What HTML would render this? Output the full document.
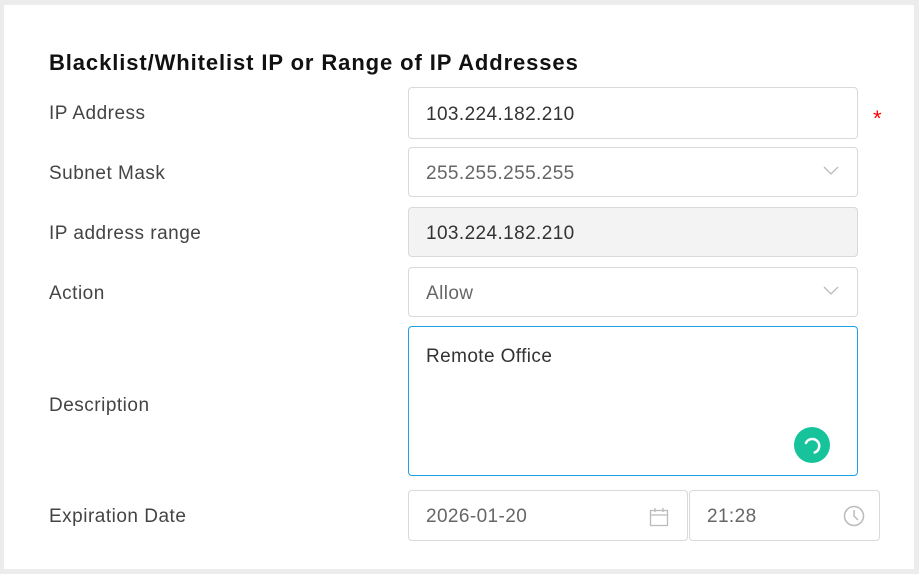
<!DOCTYPE html>
<html><head><style>
body{margin:0;width:919px;height:574px;background:#ececec;font-family:"Liberation Sans",sans-serif;position:relative;overflow:hidden}
.card{position:absolute;left:4px;top:5px;width:910px;height:564px;background:#fff}
.t{position:absolute;left:49px;top:50px;font-size:22px;font-weight:bold;color:#111;letter-spacing:0.9px}
.l{position:absolute;left:49px;font-size:19px;color:#444;letter-spacing:0.5px}
.b{position:absolute;box-sizing:border-box;border:1px solid #d9d9d9;border-radius:4px;background:#fff;font-size:19px;color:#333;padding-left:17px;padding-top:3px;display:flex;align-items:center;letter-spacing:0.4px}
.g{color:#666}
</style></head><body>
<div class="card"></div>
<div class="t">Blacklist/Whitelist IP or Range of IP Addresses</div>
<div class="l" style="top:103px">IP Address</div>
<div class="l" style="top:163px">Subnet Mask</div>
<div class="l" style="top:223px">IP address range</div>
<div class="l" style="top:283px">Action</div>
<div class="l" style="top:395px">Description</div>
<div class="l" style="top:506px">Expiration Date</div>
<div class="b" style="left:408px;top:87px;width:450px;height:52px">103.224.182.210</div>
<div style="position:absolute;left:873px;top:106px;color:#f00;font-size:22px">*</div>
<div class="b g" style="left:408px;top:147px;width:450px;height:50px">255.255.255.255
<svg style="position:absolute;right:18px;top:18px" width="16" height="10"><path d="M1 1l7 7 7-7" fill="none" stroke="#bbb" stroke-width="1.3"/></svg></div>
<div class="b" style="left:408px;top:207px;width:450px;height:50px;background:#f3f3f3">103.224.182.210</div>
<div class="b g" style="left:408px;top:267px;width:450px;height:50px">Allow
<svg style="position:absolute;right:18px;top:18px" width="16" height="10"><path d="M1 1l7 7 7-7" fill="none" stroke="#bbb" stroke-width="1.3"/></svg></div>
<div class="b" style="left:408px;top:326px;width:450px;height:150px;border-color:#1aa3e0;align-items:flex-start;padding-top:19px">Remote Office
<div style="position:absolute;left:385px;top:100px;width:36px;height:36px;border-radius:50%;background:#17c39b"><svg width="36" height="36"><path d="M13 14a7 7 0 1 1 5 12" fill="none" stroke="#fff" stroke-width="2.5" stroke-linecap="round" transform="rotate(-20 18 18)"/></svg></div></div>
<div class="b g" style="left:408px;top:490px;width:280px;height:51px">2026-01-20
<svg style="position:absolute;right:18px;top:16px" width="20" height="20"><rect x="1.5" y="3.5" width="17" height="15" fill="none" stroke="#bbb" stroke-width="1.3"/><path d="M1.5 8h17M6 1v4M14 1v4" stroke="#bbb" stroke-width="1.3"/></svg></div>
<div class="b g" style="left:689px;top:490px;width:191px;height:51px">21:28
<svg style="position:absolute;right:14px;top:14px" width="22" height="22"><circle cx="11" cy="11" r="9.5" fill="none" stroke="#bbb" stroke-width="1.5"/><path d="M11 5v6l4 4" fill="none" stroke="#bbb" stroke-width="1.5"/></svg></div>
</body></html>
